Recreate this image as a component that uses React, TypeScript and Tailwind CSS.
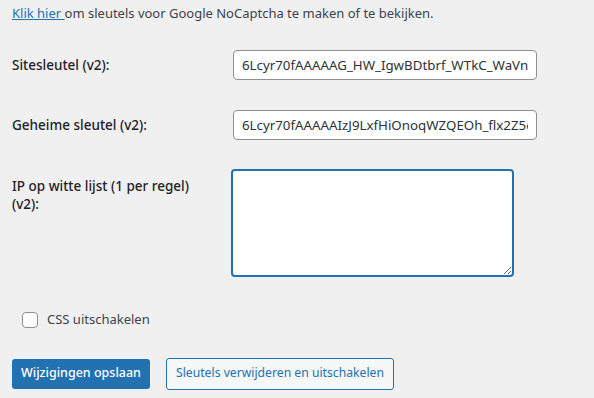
import { useState } from "react";

const font = { fontFamily: '"Noto Sans", "Open Sans", Arial, sans-serif' };

const App = () => {
  const [siteKey, setSiteKey] = useState("6Lcyr70fAAAAAG_HW_IgwBDtbrf_WTkC_WaVnAbcDeFg");
  const [secretKey, setSecretKey] = useState("6Lcyr70fAAAAAIzJ9LxfHiOnoqWZQEOh_flx2Z5eXyZ");
  const [ips, setIps] = useState("");
  const [noCss, setNoCss] = useState(false);

  return (
    <div className="min-h-[398px] w-[594px] bg-[#f0f0f1] pl-3 text-[13px] text-[#3c434a]" style={font}>
      {/* intro line, top is cut off in the shot */}
      <p className="pt-[4px] leading-[18px]">
        <a href="#" className="text-[#2271b1] underline">
          Klik hier{" "}
        </a>
        om sleutels voor Google NoCaptcha te maken of te bekijken.
      </p>

      <div className="mt-[28px] flex items-center">
        <label className="w-[221px] text-[13.5px] font-medium text-[#1d2327]">Sitesleutel (v2):</label>
        <input
          value={siteKey}
          onChange={(e) => setSiteKey(e.target.value)}
          className="h-[30px] w-[304px] rounded-[4px] border border-[#8c8f94] bg-white px-2 text-[13.3px] text-[#2c3338] outline-none"
        />
      </div>

      <div className="mt-[30px] flex items-center">
        <label className="w-[221px] text-[13.5px] font-medium text-[#1d2327]">Geheime sleutel (v2):</label>
        <input
          value={secretKey}
          onChange={(e) => setSecretKey(e.target.value)}
          className="h-[30px] w-[304px] rounded-[4px] border border-[#8c8f94] bg-white px-2 text-[13.3px] text-[#2c3338] outline-none"
        />
      </div>

      <div className="mt-[29px] flex items-start">
        <label className="w-[219px] pt-[8px] pr-3 text-[13.5px] leading-[18px] font-medium text-[#1d2327]">
          IP op witte lijst (1 per regel) (v2):
        </label>
        <textarea
          value={ips}
          onChange={(e) => setIps(e.target.value)}
          className="h-[108px] w-[283px] rounded-[4px] border-2 border-[#2271b1] bg-white px-2 py-1 text-[14px] outline-none"
        />
      </div>

      <label className="mt-[33px] ml-[10px] flex items-center gap-[9px]">
        <input
          type="checkbox"
          checked={noCss}
          onChange={(e) => setNoCss(e.target.checked)}
          className="h-4 w-4 appearance-none rounded-[4px] border border-[#8c8f94] bg-white"
        />
        <span className="text-[13px] text-[#3c434a]">CSS uitschakelen</span>
      </label>

      <div className="mt-[28px] flex items-center gap-4">
        <button className="h-[30px] w-[138px] rounded-[3px] bg-[#2271b1] text-[12.5px] font-medium text-white">
          Wijzigingen opslaan
        </button>
        <button className="h-[32px] w-[228px] rounded-[3px] border border-[#2271b1] bg-[#f6f7f7] text-[12.2px] text-[#2271b1]">
          Sleutels verwijderen en uitschakelen
        </button>
      </div>
    </div>
  );
};

export default App;
